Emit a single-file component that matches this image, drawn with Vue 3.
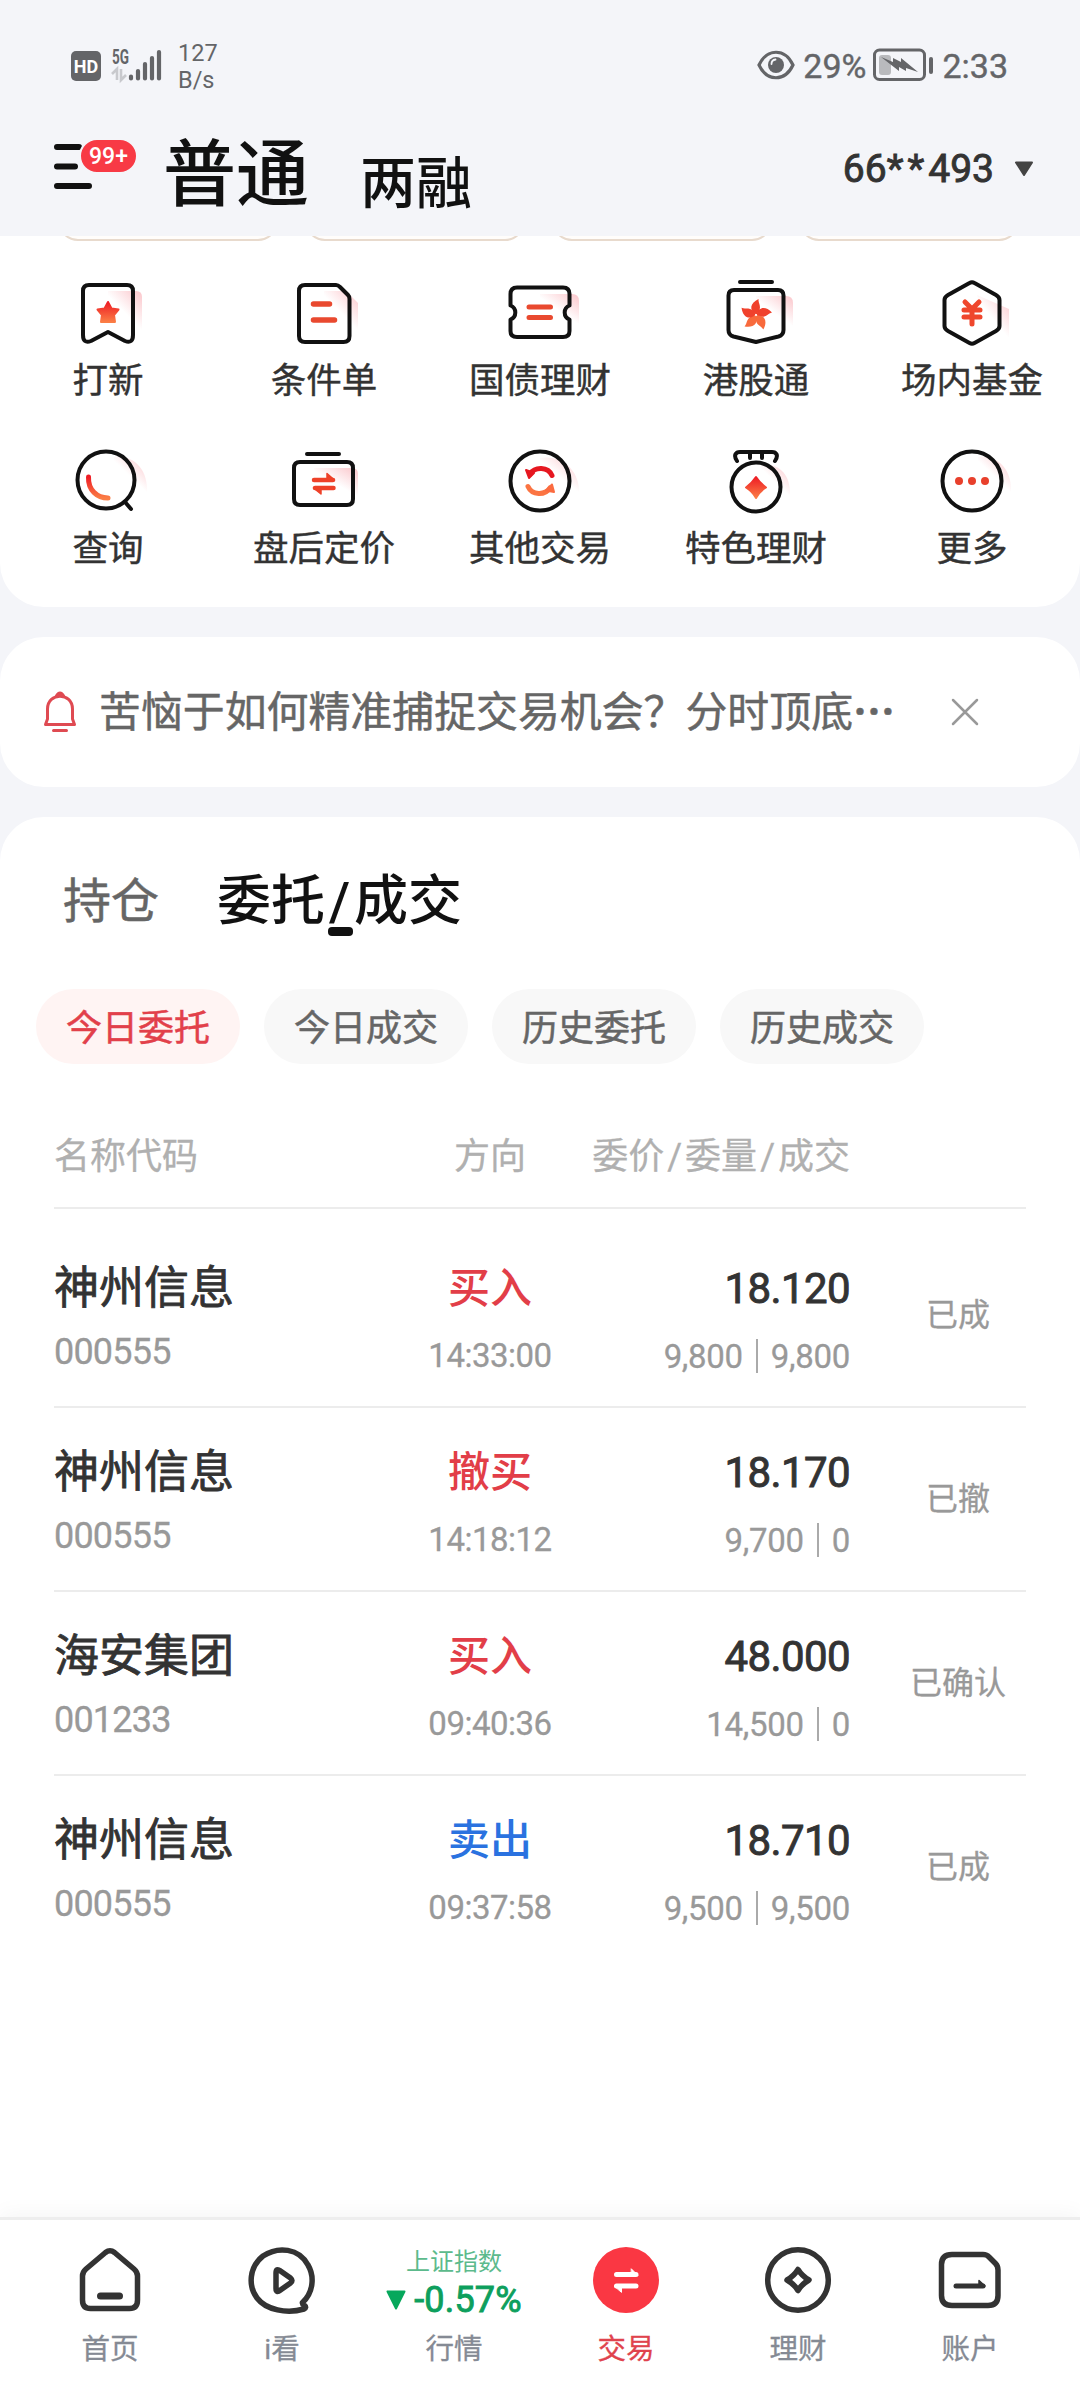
<script setup>
import { ref } from 'vue'

const accounts = ['普通', '两融']
const entries = [
    { key: 'ipo', label: '打新' },
    { key: 'cond', label: '条件单' },
    { key: 'bond', label: '国债理财' },
    { key: 'hk', label: '港股通' },
    { key: 'fund', label: '场内基金' },
    { key: 'query', label: '查询' },
    { key: 'fixed', label: '盘后定价' },
    { key: 'other', label: '其他交易' },
    { key: 'special', label: '特色理财' },
    { key: 'more', label: '更多' },
]

const chips = ['今日委托', '今日成交', '历史委托', '历史成交']
const activeChip = ref(0)

const orders = [
    { name: '神州信息', code: '000555', side: '买入', type: 'buy', time: '14:33:00', price: '18.120', amount: '9,800', deal: '9,800', status: '已成' },
    { name: '神州信息', code: '000555', side: '撤买', type: 'buy', time: '14:18:12', price: '18.170', amount: '9,700', deal: '0', status: '已撤' },
    { name: '海安集团', code: '001233', side: '买入', type: 'buy', time: '09:40:36', price: '48.000', amount: '14,500', deal: '0', status: '已确认' },
    { name: '神州信息', code: '000555', side: '卖出', type: 'sell', time: '09:37:58', price: '18.710', amount: '9,500', deal: '9,500', status: '已成' },
]

const navs = [
    { key: 'home', label: '首页' },
    { key: 'look', label: 'i看' },
    { key: 'quote', label: '行情' },
    { key: 'trade', label: '交易' },
    { key: 'wealth', label: '理财' },
    { key: 'mine', label: '账户' },
]
const activeNav = ref('trade')
const petals = [0, 72, 144, 216, 288]
</script>

<template>
    <div class="page">
        <header class="header">
            <div class="status-bar">
                <span class="hd">HD</span>
                <svg class="signal" width="50" height="34" viewBox="0 0 50 34">
                    <text x="0" y="16" font-size="20" font-weight="700" textLength="17" lengthAdjust="spacingAndGlyphs" fill="#646568">5G</text>
                    <path d="M0 26l5-5v11M9 21v11l5-5" fill="none" stroke="#c8c9cd" stroke-width="2.6" />
                    <path d="M19 28.500v2M26 23v7.500M33 16v14.500M40 10v20.500M47 4v26.500" stroke="#646568" stroke-width="4.200" stroke-linecap="round" />
                </svg>
                <div class="speed"><span>127</span><span>B/s</span></div>
                <svg class="eye" width="38" height="30" viewBox="0 0 38 30">
                    <path d="M2 15C10-2 28-2 36 15C28 32 10 32 2 15Z" fill="none" stroke="#646568" stroke-width="3.200" />
                    <circle cx="19" cy="15" r="8" fill="#646568" />
                    <path d="M14.500 14q0-4 4-4.500" fill="none" stroke="#f4f5f9" stroke-width="1.800" stroke-linecap="round" />
                </svg>
                <span class="status-text percent">29%</span>
                <svg class="battery" width="61" height="34" viewBox="0 0 61 34">
                    <rect x="1.500" y="2" width="50" height="29.500" rx="5" fill="none" stroke="#646568" stroke-width="3" />
                    <rect x="6" y="7" width="12" height="20" rx="3" fill="#b9babd" />
                    <path d="M8 9L20 14 20 10 28 14 28 10 45 24 33 20 33 23 26 19 26 23Z" fill="#646568" />
                    <rect x="56" y="9" width="4" height="17" rx="2" fill="#646568" />
                </svg>
                <span class="status-text">2:33</span>
            </div>
            <div class="title-bar">
                <div class="menu">
                    <svg width="40" height="48" viewBox="0 0 40 48">
                        <path d="M3 5h22M3 24.500h18M3 44h32" stroke="#111" stroke-width="6" stroke-linecap="round" />
                    </svg>
                    <span class="badge">99+</span>
                </div>
                <h1>{{ accounts[0] }}</h1>
                <h2>{{ accounts[1] }}</h2>
                <div class="account">
                    <span>66<i>**</i>493</span>
                    <svg width="20" height="16" viewBox="0 0 20 16"><path d="M2 1.500h16L10 14z" fill="#444" stroke="#444" stroke-width="2" stroke-linejoin="round" /></svg>
                </div>
            </div>
        </header>

        <section class="entry-card">
            <div class="banner-row">
                <div v-for="n in 4" :key="n" class="banner"></div>
            </div>
            <div class="entry-grid">
                <div v-for="item in entries" :key="item.key" class="entry">
                    <svg width="84" height="72" viewBox="-42 -36 84 72" fill="none" stroke="#111" stroke-width="4" stroke-linecap="round" stroke-linejoin="round">
                        <defs>
                            <linearGradient :id="'hot-' + item.key" x1="0" y1="0" x2="0" y2="1">
                                <stop offset="0" stop-color="#ee1c25" />
                                <stop offset="1" stop-color="#fb7d45" />
                            </linearGradient>
                            <linearGradient :id="'shade-' + item.key" x1="1" y1="0" x2="0.300" y2="0.800">
                                <stop offset="0" stop-color="#fbc5ca" />
                                <stop offset="0.700" stop-color="#fbc5ca" stop-opacity="0" />
                            </linearGradient>
                        </defs>
                        <template v-if="item.key === 'ipo'">
                            <path d="M0-22H28q6 0 6 6V18H0z" :fill="`url(#shade-${item.key})`" stroke="none" />
                            <path d="M-19-28H19q6 0 6 6V22q0 9-8 6L0 19-17 28q-8 3-8-6V-22q0-6 6-6z" />
                            <path d="M0-11L3.500-4.500 10.500-3.500 6 2 7 9H-7L-6 2-10.500-3.500-3.500-4.500z" :fill="`url(#hot-${item.key})`" :stroke="`url(#hot-${item.key})`" stroke-width="2" />
                        </template>
                        <template v-else-if="item.key === 'cond'">
                            <path d="M0-22H22L34-10V18H0z" :fill="`url(#shade-${item.key})`" stroke="none" />
                            <path d="M-19-28H12q2 0 4 2l8 8q1.500 1.500 1.500 4V23q0 6-6 6H-19q-6 0-6-6V-22q0-6 6-6z" />
                            <path d="M-10.500-9H5.500M-10.500 7H10.500" stroke="#e9492f" stroke-width="5.500" />
                        </template>
                        <template v-else-if="item.key === 'bond'">
                            <path d="M0-19H32q7 0 7 7V12H0z" :fill="`url(#shade-${item.key})`" stroke="none" />
                            <path d="M-23-25.500H23q6.500 0 6.500 6.500V-7.500A7.500 7.500 0 0 0 29.500 6.500V18q0 6-6.500 6H-23q-6.500 0-6.500-6V6.500A7.500 7.500 0 0 0-29.500-7.500V-19q0-6.500 6.500-6.500z" />
                            <path d="M-11-6H10.500M-11 4.500H10.500" stroke="#e9492f" stroke-width="5" />
                        </template>
                        <template v-else-if="item.key === 'hk'">
                            <path d="M0-17H30q7 0 7 7V14H0z" :fill="`url(#shade-${item.key})`" stroke="none" />
                            <path d="M-16-31H16M-22-23H22q5.500 0 5.500 5.500V17q0 5-5 6.500L0 29-22.500 23.500q-5-1.500-5-6.500V-17.500q0-5.500 5.500-5.500z" />
                            <path v-for="a in petals" :key="a" :transform="`translate(0 2) rotate(${a})`" d="M-0.500-1C-7-5-6-12 2.500-16 2-11 7-8 1-1z" :fill="a > 100 && a < 280 ? '#f86a3c' : '#f0412c'" stroke="none" />
                        </template>
                        <template v-else-if="item.key === 'fund'">
                            <path d="M5-18L37-4V26H12z" :fill="`url(#shade-${item.key})`" stroke="none" />
                            <path d="M2.500-30L24-18q3.500 2 3.500 5V13q0 3-3.500 5L2.500 30q-2.500 1.500-5 0L-24 18q-3.500-2-3.500-5V-13q0-3 3.500-5L-2.500-30q2.500-1.500 5 0z" />
                            <path d="M-7-11L0-4 7-11M-8-3H8M-8 4H8M0-3V11" stroke="#ef472d" stroke-width="5" />
                        </template>
                        <template v-else-if="item.key === 'query'">
                            <path d="M6-24C26-26 40-12 39 12H6z" :fill="`url(#shade-${item.key})`" stroke="none" />
                            <circle cx="-2" cy="-1" r="28.500" />
                            <path d="M17 21L23 28" />
                            <path d="M-19.500-4C-20 9-11 17 0 17" :stroke="`url(#hot-${item.key})`" stroke-width="5" />
                        </template>
                        <template v-else-if="item.key === 'fixed'">
                            <path d="M-10-13H28q6 0 6 6V16H0z" :fill="`url(#shade-${item.key})`" stroke="none" />
                            <path d="M-17-27H15M-24-19H23q6 0 6 6V18q0 6-6 6H-24q-6 0-6-6V-13q0-6 6-6z" />
                            <path d="M-10-1H9M-9 7H9.500" stroke="#ee4129" stroke-width="4.500" />
                            <path d="M3-7.500L10.500-1H3zM-10.500 7H-3V13z" fill="#ee4129" stroke="#ee4129" stroke-width="1.500" />
                        </template>
                        <template v-else-if="item.key === 'other'">
                            <path d="M0-23C22-27 40-10 39 12H0z" :fill="`url(#shade-${item.key})`" stroke="none" />
                            <circle cx="0" cy="0" r="29.500" />
                            <path d="M-10-7C-5-14.500 8-14.500 12-5.500" stroke="#e61720" stroke-width="5" />
                            <path d="M10 7C5 14.500-8 14.500-12 5.500" stroke="#fb7442" stroke-width="5" />
                            <path d="M-14-11L-11-3-6-8z" fill="#e61720" stroke="#e61720" stroke-width="2" />
                            <path d="M14 11L12 3.500 6 9.500z" fill="#fb6b40" stroke="#fb6b40" stroke-width="2" />
                        </template>
                        <template v-else-if="item.key === 'special'">
                            <path d="M5-16C24-18 35-6 34 16H5z" :fill="`url(#shade-${item.key})`" stroke="none" />
                            <circle cx="0" cy="6" r="24.500" />
                            <path d="M-19-20C-23-26-20-29-16-29H16C20-29 23-26 19-20M-6-28V-23M6-28V-23" />
                            <path d="M0-4Q4 2 10 6.500 4 10 0 17-4 10-10 6.500-4 2 0-4z" :fill="`url(#hot-${item.key})`" :stroke="`url(#hot-${item.key})`" stroke-width="2" />
                        </template>
                        <template v-else>
                            <path d="M6-24C26-26 40-12 39 12H6z" :fill="`url(#shade-${item.key})`" stroke="none" />
                            <circle cx="0" cy="0" r="29.500" />
                            <path d="M-13 0h.010M0 0h.010M13 0h.010" stroke="#e8402c" stroke-width="8" />
                        </template>
                    </svg>
                    <span>{{ item.label }}</span>
                </div>
            </div>
        </section>

        <section class="notice">
            <svg class="bell" width="34" height="42" viewBox="0 0 34 42" fill="none" stroke="#df4a52" stroke-width="3" stroke-linejoin="round" stroke-linecap="round">
                <path d="M13 5.500Q17-1.500 21 5.500M2.500 33.500H31.500L29.500 28V18C29.500 1 4.500 1 4.500 18V28zM10.500 39.500H23.500" />
            </svg>
            <p>苦恼于如何精准捕捉交易机会？分时顶底<b>⋯</b></p>
            <svg class="close" width="30" height="30" viewBox="0 0 30 30"><path d="M3 3L27 27M27 3L3 27" stroke="#999" stroke-width="2.500" stroke-linecap="round" /></svg>
        </section>

        <section class="orders">
            <div class="tabs">
                <span class="tab">持仓</span>
                <span class="tab active">委托<i>/</i>成交</span>
            </div>
            <div class="chips">
                <button v-for="(chip, index) in chips" :key="chip" :class="{ on: activeChip === index }" @click="activeChip = index">{{ chip }}</button>
            </div>
            <div class="row thead">
                <span>名称代码</span>
                <span class="center">方向</span>
                <span class="right">委价<i>/</i>委量<i>/</i>成交</span>
                <span></span>
            </div>
            <div class="tbody">
                <div v-for="(order, index) in orders" :key="index" class="row order">
                    <div>
                        <div class="name">{{ order.name }}</div>
                        <div class="code">{{ order.code }}</div>
                    </div>
                    <div class="center">
                        <div class="side" :class="order.type">{{ order.side }}</div>
                        <div class="time">{{ order.time }}</div>
                    </div>
                    <div class="right">
                        <div class="price">{{ order.price }}</div>
                        <div class="qty"><span>{{ order.amount }}</span><i></i><span>{{ order.deal }}</span></div>
                    </div>
                    <div class="state">{{ order.status }}</div>
                </div>
            </div>
        </section>

        <nav class="nav">
            <div v-for="item in navs" :key="item.key" class="nav-item" :class="{ active: activeNav === item.key }" @click="activeNav = item.key">
                <div v-if="item.key === 'quote'" class="index">
                    <span class="index-name">上证指数</span>
                    <span class="index-value">
                        <svg width="20" height="20" viewBox="0 0 20 20"><path d="M1.500 1.500h17L10 18.500z" fill="#07a85c" stroke="#07a85c" stroke-width="2" stroke-linejoin="round" /></svg>
                        -0.57%
                    </span>
                </div>
                <svg v-else width="72" height="72" viewBox="-36 -36 72 72" fill="none" stroke="#333" stroke-width="5.500" stroke-linecap="round" stroke-linejoin="round">
                    <template v-if="item.key === 'home'">
                        <path d="M-4.500-28.500Q0-32 4.500-28.500L24-12Q27.500-9 27.500-5V19Q27.500 27.500 19.500 27.500H-19.500Q-27.500 27.500-27.500 19V-5Q-27.500-9-24-12z" />
                        <path d="M-9.500 15H9.500" stroke-width="7" />
                    </template>
                    <template v-else-if="item.key === 'look'">
                        <path d="M20.500 21.500C31 12 33-4 26-16 17-33-4-35-19-25-33-14-34 5-25 17-16 29 5 33 22 28Q25 26.500 22.500 24.500 20 23 20.500 21.500" />
                        <path d="M-6-8V7.500Q-6 12.500-1.500 9L8.500 2Q11.500-0.500 8.500-3L-1.500-10Q-6-13.500-6-8z" />
                    </template>
                    <template v-else-if="item.key === 'trade'">
                        <circle cx="0" cy="-1" r="33" fill="#fa3743" stroke="none" />
                        <path d="M-9.500-6.500H10M-9.500 5H10" stroke="#fff" stroke-width="5" />
                        <path d="M5.500-12L12-5.500H5.500zM-11.500 5H-4.500V11z" fill="#fff" stroke="#fff" stroke-width="1" />
                    </template>
                    <template v-else-if="item.key === 'wealth'">
                        <circle cx="0" cy="-1" r="30.300" />
                        <path d="M0-11.500Q4-5 11-1 4 3 0 9.500-4 3-11-1-4-5 0-11.500z" />
                    </template>
                    <template v-else>
                        <path d="M-18-26.500H13Q17-26.500 19-24L25.500-17.500Q28-15 28-11V14.500Q28 24.500 18 24.500H-18Q-28.500 24.500-28.500 14.500V-16.500Q-28.500-26.500-18-26.500z" />
                        <path d="M-14 5H13" stroke-width="5" />
                        <path d="M9-0.500L15 5H9z" fill="#333" stroke-width="1.500" />
                    </template>
                </svg>
                <span class="nav-label">{{ item.label }}</span>
            </div>
        </nav>
    </div>
</template>

<style>
    body {
        margin: 0;
        background: #f4f5f9;
    }
</style>

<style scoped>
    .page {
        display: flex;
        flex-direction: column;
        width: 1080px;
        height: 2388px;
        overflow: hidden;
        background: #f4f5f9;
        color: #333;
        font-family: Roboto, "Noto Sans CJK SC", sans-serif;
    }
    .page * {
        box-sizing: border-box;
    }
    svg {
        display: block;
        flex: none;
        overflow: visible;
    }
    i {
        font-style: normal;
    }
    .header {
        height: 236px;
        flex: none;
    }
    .status-bar {
        display: flex;
        align-items: center;
        height: 130px;
        padding: 0 72px 0 71px;
        color: #646568;
    }
    .hd {
        width: 30px;
        height: 30px;
        border-radius: 5px;
        background: #646568;
        color: #fff;
        font-size: 18px;
        font-weight: 700;
        line-height: 31px;
        text-align: center;
        margin-top: 2px;
    }
    .signal {
        margin-left: 11px;
    }
    .speed {
        display: flex;
        flex-direction: column;
        margin-left: 16px;
        margin-top: 4px;
        font-size: 23.500px;
        line-height: 27px;
    }
    .eye {
        margin-left: auto;
    }
    .status-text {
        font-size: 34px;
        line-height: 40px;
        margin-top: 2px;
        -webkit-text-stroke: 0.400px currentColor;
    }
    .percent {
        margin-left: 8px;
    }
    .battery {
        margin: 0 8px 0 7px;
    }
    .title-bar {
        display: flex;
        height: 106px;
        padding-left: 54px;
    }
    .menu {
        position: relative;
        width: 109px;
        padding-top: 12px;
    }
    .badge {
        position: absolute;
        top: 8px;
        left: 25px;
        width: 59px;
        height: 36px;
        border: 2px solid #f4f5f9;
        border-radius: 18px;
        background: #f83a45;
        color: #fff;
        font-size: 23px;
        font-weight: 500;
        line-height: 33px;
        text-align: center;
    }
    h1, h2 {
        margin: 0;
        color: #111;
        font-weight: 500;
    }
    h1 {
        padding-top: 3px;
        font-size: 73px;
        line-height: 84px;
    }
    h2 {
        margin-left: 51px;
        padding-top: 12px;
        font-size: 56px;
        line-height: 84px;
    }
    .account {
        display: flex;
        align-items: center;
        gap: 20px;
        height: 78px;
        margin-left: auto;
        margin-right: 46px;
        font-size: 39px;
        -webkit-text-stroke: 0.900px currentColor;
    }
    .account i {
        letter-spacing: 4px;
    }
    .entry-card {
        height: 371px;
        flex: none;
        border-radius: 0 0 44px 44px;
        background: #fff;
    }
    .banner-row {
        display: flex;
        align-items: flex-end;
        gap: 27px;
        height: 5px;
        padding-left: 58px;
        overflow: hidden;
    }
    .banner {
        width: 220px;
        height: 60px;
        flex: none;
        border: 2px solid #e8dacd;
        border-radius: 20px;
        background: #fffdfb;
    }
    .entry-grid {
        display: grid;
        grid-template-columns: repeat(5, 216px);
        grid-auto-rows: 168px;
        padding-top: 36px;
    }
    .entry {
        display: flex;
        flex-direction: column;
        align-items: center;
    }
    .entry span {
        margin-top: 7px;
        font-size: 35.500px;
        line-height: 50px;
        white-space: nowrap;
        -webkit-text-stroke: 0.400px currentColor;
    }
    .notice {
        display: flex;
        align-items: center;
        height: 150px;
        flex: none;
        margin-top: 30px;
        padding-left: 43px;
        border-radius: 44px;
        background: #fff;
    }
    .notice p {
        margin: 0 0 0 22px;
        padding-top: 2px;
        width: 800px;
        color: #666;
        font-size: 41.900px;
        line-height: 60px;
        white-space: nowrap;
        -webkit-text-stroke: 0.500px currentColor;
    }
    .notice b {
        font-weight: 700;
    }
    .close {
        margin-left: 51px;
    }
    .orders {
        flex: 1;
        margin-top: 30px;
        border-radius: 44px 44px 0 0;
        background: #fff;
    }
    .tabs {
        display: flex;
        align-items: center;
        height: 164px;
        padding: 6px 0 0 63px;
    }
    .tab {
        color: #666;
        font-size: 48px;
        line-height: 70px;
        -webkit-text-stroke: 0.500px currentColor;
    }
    .tab.active {
        position: relative;
        margin-left: 58px;
        color: #111;
        font-size: 54px;
        font-weight: 500;
        -webkit-text-stroke: 0;
    }
    .tab.active i {
        margin: 0 4px;
    }
    .tab.active::after {
        content: "";
        position: absolute;
        left: 50%;
        bottom: 1px;
        width: 25px;
        height: 9px;
        margin-left: -12px;
        border-radius: 4px;
        background: #111;
    }
    .chips {
        display: flex;
        gap: 24px;
        padding: 8px 0 0 36px;
    }
    .chips button {
        width: 204px;
        height: 75px;
        padding: 0 0 4px;
        border: none;
        border-radius: 38px;
        background: #f8f8f8;
        color: #666;
        font-family: inherit;
        font-size: 36px;
        -webkit-text-stroke: 0.500px currentColor;
    }
    .chips .on {
        background: #fff4f3;
        color: #e2404a;
    }
    .row {
        display: grid;
        grid-template-columns: 336px 200px 260px 176px;
        margin: 0 54px;
        border-bottom: 2px solid #ececec;
    }
    .thead {
        height: 145px;
        padding-top: 67px;
        color: #b0b0b0;
        font-size: 36px;
        line-height: 52px;
        -webkit-text-stroke: 0.300px currentColor;
    }
    .thead i {
        margin: 0 3px;
    }
    .center {
        text-align: center;
    }
    .right {
        text-align: right;
        white-space: nowrap;
    }
    .tbody {
        padding-top: 15px;
    }
    .order {
        height: 184px;
        padding-top: 32px;
    }
    .order:last-child {
        border-bottom: none;
    }
    .name, .side, .price {
        height: 64px;
        line-height: 66px;
    }
    .name {
        font-size: 45px;
        -webkit-text-stroke: 0.800px currentColor;
    }
    .code {
        color: #999;
        font-size: 36px;
        line-height: 64px;
        letter-spacing: -0.800px;
        -webkit-text-stroke: 0.300px currentColor;
    }
    .side {
        font-size: 42px;
        font-weight: 500;
    }
    .buy {
        color: #e23e48;
    }
    .sell {
        color: #2a72e0;
    }
    .time {
        color: #999;
        font-size: 33px;
        line-height: 72px;
        letter-spacing: -0.500px;
        -webkit-text-stroke: 0.300px currentColor;
    }
    .price {
        font-size: 42px;
        letter-spacing: -0.600px;
        -webkit-text-stroke: 0.900px currentColor;
    }
    .qty {
        display: flex;
        align-items: center;
        justify-content: flex-end;
        height: 72px;
        color: #999;
        font-size: 33px;
        letter-spacing: -0.300px;
        -webkit-text-stroke: 0.300px currentColor;
    }
    .qty i {
        width: 2px;
        height: 34px;
        margin: 0 13px;
        background: #aaa;
    }
    .state {
        padding-left: 40px;
        color: #999;
        font-size: 32px;
        line-height: 118px;
        text-align: center;
        -webkit-text-stroke: 0.300px currentColor;
    }
    .nav {
        display: flex;
        height: 171px;
        flex: none;
        padding: 25px 24px 0;
        border-top: 3px solid #eee;
        background: #fff;
        box-shadow: 0 -4px 20px rgba(0, 0, 0, 0.040);
    }
    .nav-item {
        display: flex;
        flex-direction: column;
        align-items: center;
        width: 172px;
    }
    .nav-label {
        margin-top: 11px;
        color: #858a94;
        font-size: 28.500px;
        line-height: 44px;
        -webkit-text-stroke: 0.300px currentColor;
    }
    .active .nav-label {
        color: #e0434d;
    }
    .index {
        display: flex;
        flex-direction: column;
        align-items: center;
        height: 72px;
    }
    .index-name {
        color: #5cba8c;
        font-size: 24px;
        line-height: 34px;
    }
    .index-value {
        display: flex;
        align-items: center;
        gap: 8px;
        color: #0d9f5d;
        font-size: 36px;
        line-height: 42px;
        letter-spacing: 0.200px;
        white-space: nowrap;
        -webkit-text-stroke: 0.900px currentColor;
    }
</style>
